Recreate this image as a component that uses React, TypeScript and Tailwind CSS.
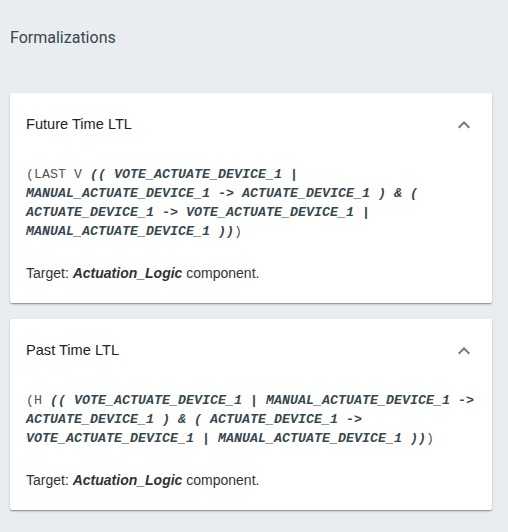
import React from 'react';

const formalizations = [
  {
    title: 'Future Time LTL',
    prefix: '(LAST V ',
    body: '(( VOTE_ACTUATE_DEVICE_1 | MANUAL_ACTUATE_DEVICE_1 -> ACTUATE_DEVICE_1 ) & ( ACTUATE_DEVICE_1 -> VOTE_ACTUATE_DEVICE_1 | MANUAL_ACTUATE_DEVICE_1 ))',
  },
  {
    title: 'Past Time LTL',
    prefix: '(H ',
    body: '(( VOTE_ACTUATE_DEVICE_1 | MANUAL_ACTUATE_DEVICE_1 -> ACTUATE_DEVICE_1 ) & ( ACTUATE_DEVICE_1 -> VOTE_ACTUATE_DEVICE_1 | MANUAL_ACTUATE_DEVICE_1 ))',
  },
];

function ExpandLess() {
  return (
    <svg width="24" height="24" viewBox="0 0 24 24" className="fill-[#757575]">
      <path d="M12 8l-6 6 1.41 1.41L12 10.83l4.59 4.58L18 14z" />
    </svg>
  );
}

export default function App() {
  return (
    <div className="min-h-[532px] w-[508px] bg-[#eaedf0] pl-[10px] pt-[26px] pb-6 font-['Roboto',sans-serif]">
      <h2 className="text-[16px] leading-6 text-[#37474f] mb-[43px]">Formalizations</h2>

      <div className="w-[482px] flex flex-col gap-4">
        {formalizations.map((f) => (
          <div
            key={f.title}
            className="bg-white rounded-[2px] shadow-[0_2px_2px_-1px_rgba(0,0,0,0.25),0_1px_1px_0_rgba(0,0,0,0.14),0_1px_3px_0_rgba(0,0,0,0.12)]"
          >
            {/* Header */}
            <div className="h-16 flex items-center justify-between px-4">
              <span className="font-['Liberation_Sans',Arial,sans-serif] text-[14.6px] text-[#222]">{f.title}</span>
              <ExpandLess />
            </div>

            {/* Content */}
            <div className="px-4 pt-2 pb-5">
              <p className="font-['Liberation_Mono','Courier_New',monospace] text-[13.33px] leading-[19px] text-[#555] mb-[22px]">
                {f.prefix}
                <span className="font-bold italic text-[#37474f]">{f.body}</span>)
              </p>
              <p className="font-['Liberation_Sans',Arial,sans-serif] text-[14px] leading-5 text-[#333]">
                Target: <span className="font-bold italic">Actuation_Logic</span> component.
              </p>
            </div>
          </div>
        ))}
      </div>
    </div>
  );
}
